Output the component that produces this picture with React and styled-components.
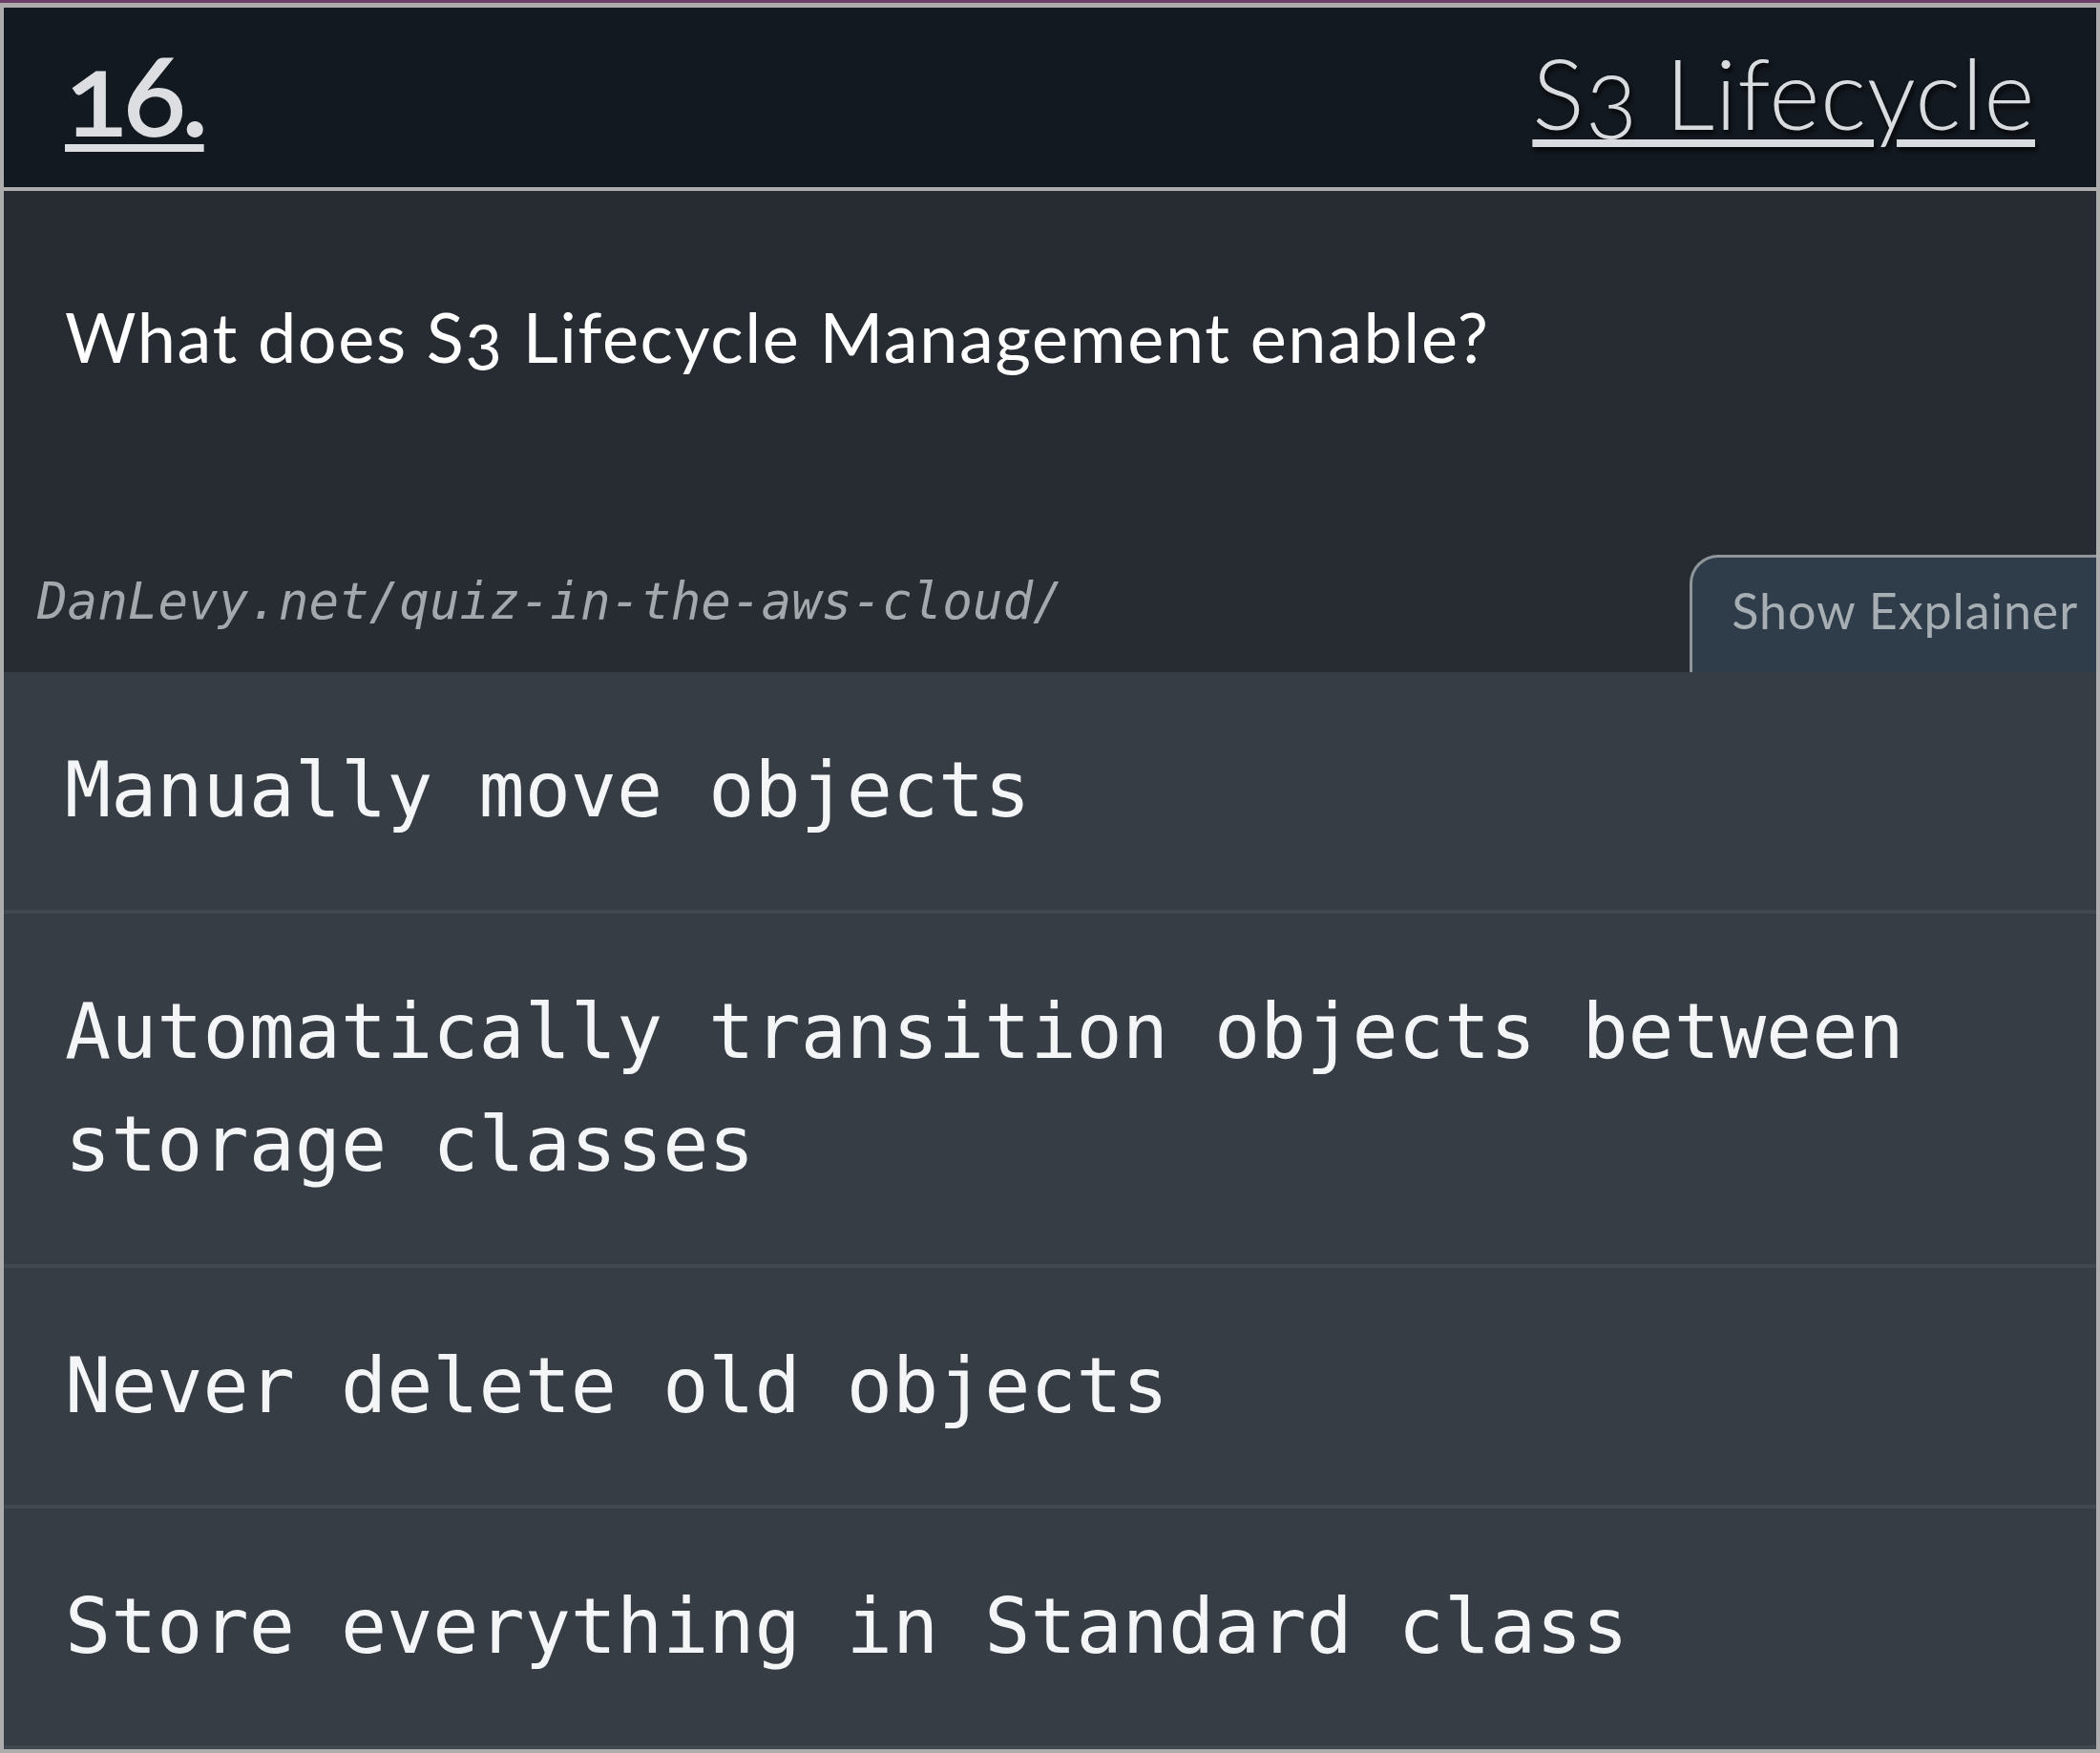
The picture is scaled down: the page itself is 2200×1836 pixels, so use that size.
import React from "react";
import styled, { createGlobalStyle } from "styled-components";

const Global = createGlobalStyle`
  html, body {
    margin: 0;
    padding: 0;
    background: #6b3d68;
  }
  body {
    font-family: "Lato", "Noto Sans", sans-serif;
  }
  * { box-sizing: border-box; }
`;

const Card = styled.div`
  margin-top: 3px;
  width: 2200px;
  border: 4px solid #adadad;
  border-top-width: 5px;
  background: #272c33;
  overflow: hidden;
`;

const Header = styled.header`
  height: 192px;
  background: #131920;
  border-bottom: 4px solid #adadad;
  padding: 0 64px;
  display: flex;
  justify-content: space-between;
  align-items: flex-start;
`;

const Number = styled.a`
  margin-top: 27px;
  font-family: "Lato", sans-serif;
  font-weight: 600;
  font-size: 122px;
  line-height: 1;
  color: #dcdee1;
  font-variant-numeric: oldstyle-nums;
  letter-spacing: -5px;
  text-decoration: underline;
  text-decoration-thickness: 8px;
  text-underline-offset: 8px;
`;

const Title = styled.a`
  margin-top: 38px;
  font-family: "Lato", sans-serif;
  font-weight: 300;
  font-size: 102px;
  line-height: 1;
  color: #d9dcdf;
  letter-spacing: 0.6px;
  font-variant-numeric: oldstyle-nums;
  text-shadow: 2px 4px 5px rgba(0, 0, 0, 0.75);
  text-decoration: underline;
  text-decoration-thickness: 8px;
  text-underline-offset: 10px;
`;

const Body = styled.section`
  padding-top: 109px;
  display: flex;
  flex-direction: column;
`;

const Question = styled.h2`
  margin: 0 64px 186px;
  font-family: "Lato", sans-serif;
  font-weight: 400;
  font-size: 72px;
  line-height: 1.2;
  letter-spacing: 1.6px;
  color: #ffffff;
  font-variant-numeric: oldstyle-nums;
`;

const Footer = styled.div`
  display: flex;
  justify-content: space-between;
  align-items: flex-end;
`;

const Url = styled.span`
  margin: 0 0 44px 35px;
  font-family: "DejaVu Sans Mono", monospace;
  font-style: italic;
  font-size: 52.5px;
  line-height: 1.164;
  color: #a3a8ad;
`;

const ExplainButton = styled.button`
  height: 123px;
  margin: 0;
  padding: 24px 19px 0 41px;
  align-self: flex-end;
  display: flex;
  align-items: flex-start;
  background: #2f3d4a;
  border: 3px solid #8e959b;
  border-bottom: none;
  border-right: none;
  border-top-left-radius: 30px;
  font-family: "Lato", sans-serif;
  font-weight: 400;
  font-size: 52px;
  line-height: 1.2;
  letter-spacing: 0.9px;
  color: #a6adb3;
  cursor: pointer;
`;

const Options = styled.ul`
  list-style: none;
  margin: 0;
  padding: 0;
  background: #373d45;
`;

const Option = styled.li`
  padding: 65px 64px;
  border-bottom: 4px solid #42484f;
  font-family: "DejaVu Sans Mono", monospace;
  font-size: 80px;
  line-height: 118.4px;
  color: #f4f5f6;
`;

const options = [
  "Manually move objects",
  "Automatically transition objects between storage classes",
  "Never delete old objects",
  "Store everything in Standard class",
];

export default function App() {
  return (
    <>
      <Global />
      <Card>
        <Header>
          <Number>16.</Number>
          <Title>S3 Lifecycle</Title>
        </Header>
        <Body>
          <Question>What does S3 Lifecycle Management enable?</Question>
          <Footer>
            <Url>DanLevy.net/quiz-in-the-aws-cloud/</Url>
            <ExplainButton>Show Explainer</ExplainButton>
          </Footer>
        </Body>
        <Options>
          {options.map((o) => (
            <Option key={o}>{o}</Option>
          ))}
        </Options>
      </Card>
    </>
  );
}
